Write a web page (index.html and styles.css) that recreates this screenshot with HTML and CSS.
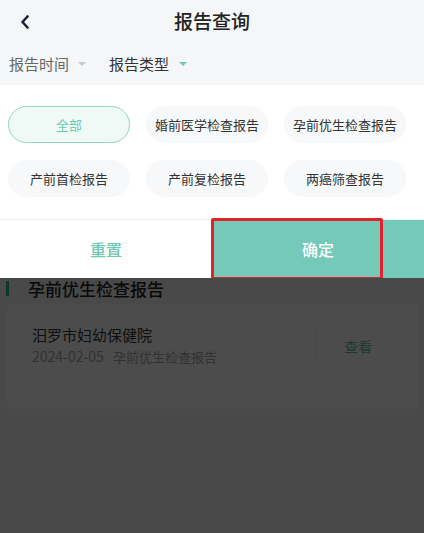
FILE: index.html
```html
<!DOCTYPE html>
<html lang="zh-CN">
<head>
<meta charset="utf-8">
<link rel="stylesheet" href="styles.css">
</head>
<body>
<div class="app">
  <header class="topbar">
    <span class="back">
      <svg width="10" height="14" viewBox="0 0 10 14"><path d="M7.5 1.5 L2.5 7 L7.5 12.5" fill="none" stroke="#1b1f33" stroke-width="2.6" stroke-linecap="round" stroke-linejoin="round"/></svg>
    </span>
    <h1 class="title">报告查询</h1>
  </header>
  <nav class="filters">
    <div class="filter">报告时间<span class="tri tri-gray"></span></div>
    <div class="filter filter-active">报告类型<span class="tri tri-teal"></span></div>
  </nav>
  <section class="panel">
    <div class="chips">
      <div class="chip chip-on">全部</div>
      <div class="chip">婚前医学检查报告</div>
      <div class="chip">孕前优生检查报告</div>
      <div class="chip">产前首检报告</div>
      <div class="chip">产前复检报告</div>
      <div class="chip">两癌筛查报告</div>
    </div>
    <div class="actions">
      <div class="btn btn-reset">重置</div>
      <div class="btn btn-ok">确定</div>
      <div class="mark"></div>
    </div>
  </section>
  <main class="list">
    <div class="sec-head"><span class="bar"></span>孕前优生检查报告</div>
    <div class="card">
      <div class="card-row">
        <div class="info">
          <div class="hosp">汨罗市妇幼保健院</div>
          <div class="meta"><span class="date">2024-02-05</span>孕前优生检查报告</div>
        </div>
        <div class="divider"></div>
        <div class="view">查看</div>
      </div>
    </div>
  </main>
</div>
</body>
</html>
```
FILE: styles.css
```css
* { box-sizing: border-box; margin: 0; padding: 0; }
html, body { width: 424px; height: 533px; overflow: hidden; }
body {
  font-family: "Noto Sans CJK SC", "Noto Sans", sans-serif;
  background: #f5f6f8;
  color: #333;
}
.app { display: flex; flex-direction: column; height: 533px; }
.topbar {
  height: 42px;
  display: flex;
  align-items: center;
  justify-content: center;
  position: relative;
  background: #f5f6f8;
}
.back {
  position: absolute;
  left: 20px;
  top: 15px;
  display: flex;
}
.title {
  font-size: 19px;
  font-weight: 500;
  color: #222;
  line-height: 24px;
  margin-top: -1px;
}
.filters {
  height: 43px;
  display: flex;
  align-items: center;
  padding-left: 9px;
  gap: 23px;
  background: #f5f6f8;
}
.filter {
  font-size: 15px;
  color: #666;
  display: flex;
  align-items: center;
  line-height: 20px;
}
.filter-active { color: #333; }
.tri {
  display: inline-block;
  width: 0; height: 0;
  border-left: 4px solid transparent;
  border-right: 4px solid transparent;
  border-top: 4px solid #c9c9c9;
  margin-left: 9px;
  margin-top: 1px;
}
.tri-teal { border-top-color: #6fc9b4; margin-left: 10px; }
.panel { background: #fff; }
.chips {
  display: grid;
  grid-template-columns: repeat(3, 1fr);
  column-gap: 16px;
  row-gap: 17px;
  padding: 21px 18px 22px 8px;
}
.chip {
  height: 37px;
  border-radius: 19px;
  background: #f7f8fa;
  display: flex;
  align-items: center;
  justify-content: center;
  font-size: 13px;
  color: #333;
}
.chip-on {
  background: #effaf7;
  border: 1px solid #92d6c5;
  color: #6ccab3;
}
.actions {
  display: flex;
  height: 59px;
  border-top: 1px solid #eeeeee;
  position: relative;
}
.btn {
  flex: 1;
  display: flex;
  align-items: center;
  justify-content: center;
  font-size: 16px;
  font-weight: 500;
}
.btn-reset { color: #6cc8b4; background: #fff; }
.btn-ok { color: #fff; background: #74c9b9; }
.mark {
  position: absolute;
  left: 211px;
  top: -2px;
  width: 172px;
  height: 62px;
  border: 3px solid #e2232b;
  border-radius: 2px;
}
.list {
  flex: 1;
  position: relative;
  background: #f5f6f8;
}
.list::after {
  content: "";
  position: absolute;
  inset: 0;
  background: rgba(0, 0, 0, 0.7);
}
.sec-head {
  height: 22px;
  display: flex;
  align-items: center;
  font-size: 17px;
  font-weight: 500;
  color: #222;
  padding-left: 6px;
  margin-top: -1px;
}
.bar {
  width: 3px;
  height: 15px;
  background: #2fb888;
  margin-right: 19px;
}
.card {
  margin: 5px 6px 0 7px;
  height: 105px;
  background: #fff;
  border-radius: 6px;
  padding: 21px 19px 0 25px;
}
.card-row {
  display: flex;
  align-items: center;
}
.info { flex: 1; }
.hosp {
  font-size: 15px;
  line-height: 20px;
  color: #333;
}
.meta {
  margin-top: 1px;
  font-size: 13px;
  line-height: 20px;
  color: #a8a8a8;
}
.date { margin-right: 9px; font-size: 14px; }
.divider {
  width: 1px;
  height: 34px;
  background: #e6e6e6;
}
.view {
  width: 82px;
  text-align: center;
  font-size: 14px;
  color: #62bfa9;
}
```
